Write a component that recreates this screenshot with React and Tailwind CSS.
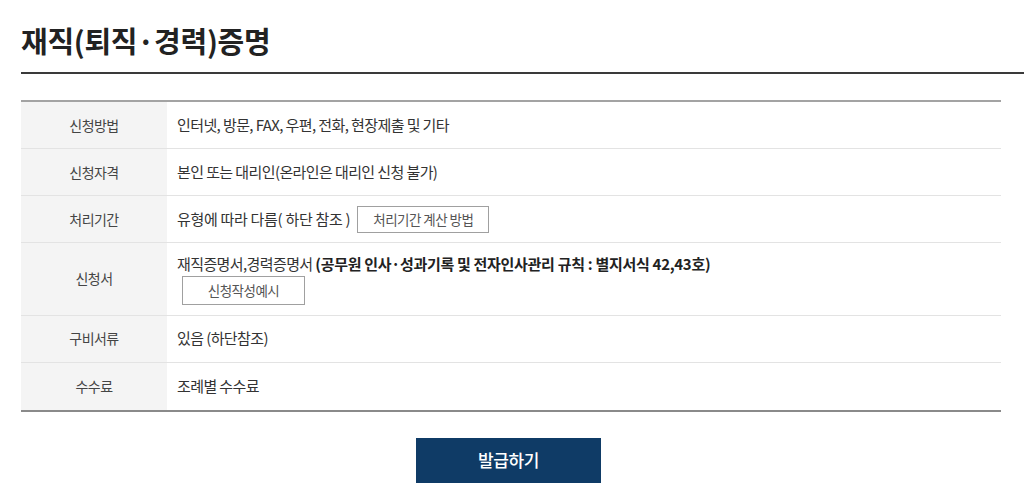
import React from 'react';

const rows = [
    { label: '신청방법', content: '인터넷, 방문, FAX, 우편, 전화, 현장제출 및 기타' },
    { label: '신청자격', content: '본인 또는 대리인(온라인은 대리인 신청 불가)' },
    { label: '처리기간', content: 'period' },
    { label: '신청서', content: 'form' },
    { label: '구비서류', content: '있음 (하단참조)' },
    { label: '수수료', content: '조례별 수수료' },
];

const font = { fontFamily: '"Noto Sans CJK KR", "Noto Sans", sans-serif' };

const OutlineButton = ({ children, className }) => (
    <button className={`border border-[#a0a0a0] bg-white text-[13.5px] text-[#555] tracking-[-0.04em] ${className}`}>
        {children}
    </button>
);

const Cell = ({ type, text }) => {
    if (type === 'period') {
        return (
            <div className="flex items-center">
                <span className="tracking-[-0.02em]">유형에 따라 다름( 하단 참조 )</span>
                <OutlineButton className="ml-[7px] w-[132px] h-[27px]">처리기간 계산 방법</OutlineButton>
            </div>
        );
    }
    if (type === 'form') {
        return (
            <div className="flex flex-col items-start py-[10px]">
                <span>
                    재직증명서,경력증명서 <b className="font-bold text-[#222] tracking-[-0.02em]">(공무원 인사·성과기록 및 전자인사관리 규칙 : 별지서식 42,43호)</b>
                </span>
                <OutlineButton className="ml-[5px] w-[123px] h-[29px]">신청작성예시</OutlineButton>
            </div>
        );
    }
    return <span>{text}</span>;
};

export default function App() {
    return (
        <div className="bg-white w-[1024px] h-[503px] overflow-hidden text-[#333]" style={font}>
            <div className="pl-[21px] pt-[20px]">
                <h1 className="text-[29px] font-bold text-[#222] leading-[40px] tracking-[-0.01em]">재직(퇴직·경력)증명</h1>
            </div>
            <div className="ml-[21px] mt-[12px] h-[2px] bg-[#3a3a3a]" />

            <div className="ml-[21px] mt-[26px] w-[980px] border-t-2 border-[#a3a3a3] border-b-2 border-b-[#8a8a8a]">
                {rows.map((row, idx) => (
                    <div
                        key={row.label}
                        className={`flex ${idx < rows.length - 1 ? 'border-b border-[#e3e3e3]' : ''} ${row.content === 'form' ? 'min-h-[71px]' : 'h-[47px]'}`}
                    >
                        <div className="w-[146px] shrink-0 bg-[#f4f4f4] flex items-center justify-center text-[14px] tracking-[-0.04em] text-[#444]">
                            {row.label}
                        </div>
                        <div className="flex-1 flex items-center pl-[10px] text-[15px] tracking-[-0.04em]">
                            <Cell type={row.content} text={row.content} />
                        </div>
                    </div>
                ))}
            </div>

            <div className="flex justify-center mt-[26px] pr-[7px]">
                <button className="w-[185px] h-[45px] bg-[#0f3b66] text-white text-[17px] font-medium tracking-[-0.02em]">
                    발급하기
                </button>
            </div>
        </div>
    );
}
